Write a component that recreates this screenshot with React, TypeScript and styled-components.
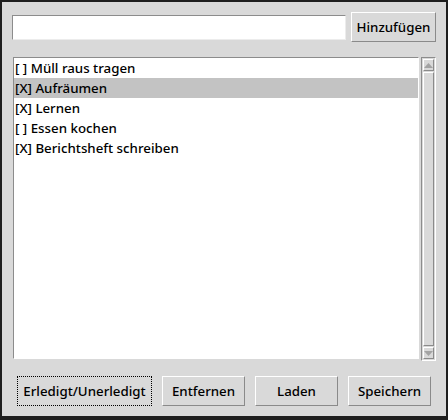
import React, { useState } from 'react';
import styled, { createGlobalStyle } from 'styled-components';

const GlobalStyle = createGlobalStyle`
    html, body {
        margin: 0;
        padding: 0;
        background: #1e1e1e;
    }
    body {
        font-family: "Noto Sans", "DejaVu Sans", sans-serif;
        font-size: 13.3px;
        font-weight: 500;
        color: #000;
    }
`;

interface Todo {
    text: string;
    done: boolean;
}

const initialTodos: Todo[] = [
    { text: 'Müll raus tragen', done: false },
    { text: 'Aufräumen', done: true },
    { text: 'Lernen', done: true },
    { text: 'Essen kochen', done: false },
    { text: 'Berichtsheft schreiben', done: true },
];

const App = () => {
    const [todos] = useState<Todo[]>(initialTodos);
    const [selected, setSelected] = useState(1);
    const [input, setInput] = useState('');

    return (
        <>
            <GlobalStyle />
            <Window>
                <TopRow>
                    <Entry value={input} onChange={e => setInput(e.target.value)} />
                    <TkButton top>Hinzufügen</TkButton>
                </TopRow>
                <ListArea>
                    <ListBox>
                        {todos.map((t, i) => (
                            <ListItem key={i} active={i === selected} onClick={() => setSelected(i)}>
                                {t.done ? '[X]' : '[ ]'} {t.text}
                            </ListItem>
                        ))}
                    </ListBox>
                    <Scrollbar>
                        <ArrowBox>
                            <svg width="9" height="5" viewBox="0 0 9 5">
                                <polygon points="4.5,0 9,5 0,5" fill="#a3a3a3" />
                            </svg>
                        </ArrowBox>
                        <Slider />
                        <ArrowBox>
                            <svg width="9" height="5" viewBox="0 0 9 5">
                                <polygon points="0,0 9,0 4.5,5" fill="#a3a3a3" />
                            </svg>
                        </ArrowBox>
                    </Scrollbar>
                </ListArea>
                <BottomRow>
                    <TkButton wide focused>Erledigt/Unerledigt</TkButton>
                    <TkButton>Entfernen</TkButton>
                    <TkButton>Laden</TkButton>
                    <TkButton>Speichern</TkButton>
                </BottomRow>
            </Window>
        </>
    );
};

export default App;

const Window = styled.div`
    margin: 2px 2px 4px 2px;
    height: 414px;
    box-sizing: border-box;
    background: #d9d9d9;
    padding: 10px;
    display: flex;
    flex-direction: column;
`;

const TopRow = styled.div`
    display: flex;
    align-items: center;
    gap: 5px;
    height: 30px;
`;

const Entry = styled.input`
    flex: 1;
    height: 25px;
    box-sizing: border-box;
    border: 1px solid;
    border-color: #8c8c8c #ececec #ececec #8c8c8c;
    background: #fff;
    outline: none;
    font: inherit;
    padding: 0 4px;
`;

interface ButtonProps {
    wide?: boolean;
    focused?: boolean;
    top?: boolean;
}

const TkButton = styled.button<ButtonProps>`
    height: 30px;
    box-sizing: border-box;
    background: #d9d9d9;
    border: 1px solid;
    border-color: #ffffff #8a8a8a #8a8a8a #ffffff;
    font: inherit;
    color: #000;
    padding: 0 4px;
    white-space: nowrap;
    width: ${p => (p.top ? '85px' : p.wide ? '135px' : '83px')};
    ${p => (p.focused ? 'border: 1px dotted #000;' : '')}
`;

const ListArea = styled.div`
    display: flex;
    gap: 2px;
    margin-top: 15px;
    margin-left: 1px;
    height: 304px;
`;

const ListBox = styled.div`
    flex: 1;
    box-sizing: border-box;
    background: #fff;
    border: 1px solid;
    border-color: #8c8c8c #ffffff #ffffff #8c8c8c;
    height: 302px;
    overflow: hidden;
`;

const ListItem = styled.div<{ active: boolean }>`
    height: 20px;
    line-height: 20px;
    padding-left: 1px;
    white-space: pre;
    background: ${p => (p.active ? '#c3c3c3' : 'transparent')};
    cursor: default;
`;

const Scrollbar = styled.div`
    width: 15px;
    box-sizing: border-box;
    border: 1px solid;
    border-color: #8c8c8c #ffffff #ffffff #8c8c8c;
    display: flex;
    flex-direction: column;
    gap: 1px;
    padding: 1px;
    height: 304px;
`;

const ArrowBox = styled.div`
    height: 12px;
    box-sizing: border-box;
    border: 1px solid;
    border-color: #ffffff #8a8a8a #8a8a8a #ffffff;
    display: flex;
    align-items: center;
    justify-content: center;
`;

const Slider = styled.div`
    flex: 1;
    box-sizing: border-box;
    border: 1px solid;
    border-color: #ffffff #8a8a8a #8a8a8a #ffffff;
`;

const BottomRow = styled.div`
    display: flex;
    gap: 10px;
    margin-top: auto;
    padding-left: 5px;
`;
